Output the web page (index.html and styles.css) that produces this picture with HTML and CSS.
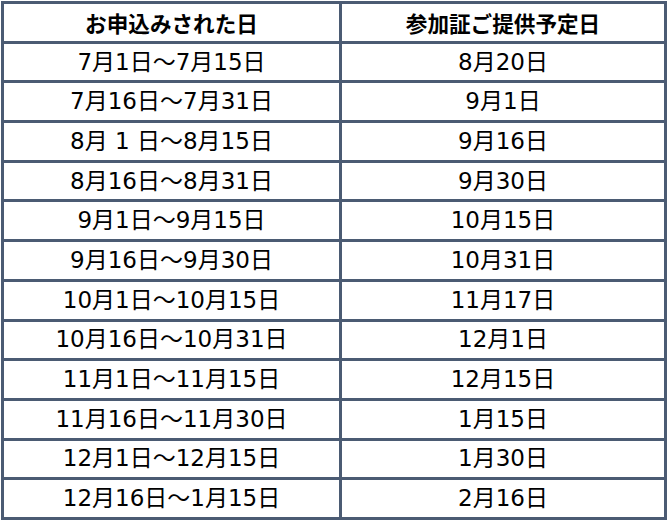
FILE: index.html
```html
<!DOCTYPE html>
<html lang="ja">
<head>
<meta charset="utf-8">
<link rel="stylesheet" href="styles.css">
</head>
<body>
<div class="sched">
  <div class="cell head">お申込みされた日</div><div class="cell head">参加証ご提供予定日</div>
  <div class="cell">7月1日～7月15日</div><div class="cell">8月20日</div>
  <div class="cell">7月16日～7月31日</div><div class="cell">9月1日</div>
  <div class="cell">8月 1 日～8月15日</div><div class="cell">9月16日</div>
  <div class="cell">8月16日～8月31日</div><div class="cell">9月30日</div>
  <div class="cell">9月1日～9月15日</div><div class="cell">10月15日</div>
  <div class="cell">9月16日～9月30日</div><div class="cell">10月31日</div>
  <div class="cell">10月1日～10月15日</div><div class="cell">11月17日</div>
  <div class="cell">10月16日～10月31日</div><div class="cell">12月1日</div>
  <div class="cell">11月1日～11月15日</div><div class="cell">12月15日</div>
  <div class="cell">11月16日～11月30日</div><div class="cell">1月15日</div>
  <div class="cell">12月1日～12月15日</div><div class="cell">1月30日</div>
  <div class="cell">12月16日～1月15日</div><div class="cell">2月16日</div>
</div>
</body>
</html>
```
FILE: styles.css
```css
html, body {
  margin: 0;
  padding: 0;
  background: #ffffff;
}
body {
  padding: 1px 0 0 1px;
}
.sched {
  display: grid;
  grid-template-columns: 335px 322px;
  grid-template-rows: repeat(13, 36.7px);
  gap: 3px;
  padding: 3px;
  width: max-content;
  background: #4b5b73;
  font-family: "DejaVu Sans", "Noto Sans CJK JP", sans-serif;
  font-size: 23px;
  color: #000000;
}
.cell {
  background: #ffffff;
  display: flex;
  align-items: center;
  justify-content: center;
  white-space: nowrap;
  line-height: 1;
}
.head {
  font-family: "Noto Sans CJK JP", sans-serif;
  font-weight: 700;
  font-size: 21.6px;
}
```
